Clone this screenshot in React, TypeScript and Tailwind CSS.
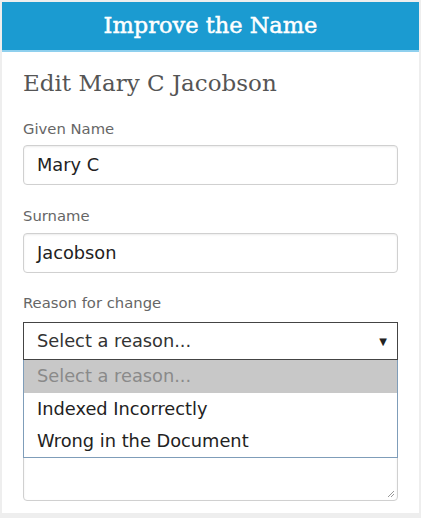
import React from 'react';

const slab = { fontFamily: '"DejaVu Serif", "Liberation Serif", serif' };

const App: React.FC = () => {
    const options = ['Select a reason...', 'Indexed Incorrectly', 'Wrong in the Document'];

    return (
        <div className="w-[421px] h-[518px] bg-[#eeeeee] p-[2px] overflow-hidden" style={{ fontFamily: '"DejaVu Sans", Verdana, sans-serif' }}>
            <div className="bg-white h-[511px] flex flex-col">
                <div className="h-[50px] bg-[#1b9bd1] border-b-2 border-[#8fd0ee] flex items-center justify-center">
                    <h1 className="text-white text-[22.5px] [-webkit-text-stroke:0.5px_white]" style={slab}>Improve the Name</h1>
                </div>
                <div className="pl-[21px] pr-[21px] flex flex-col">
                    <h2 className="text-[#555555] text-[23px] leading-[30px] mt-[16px]" style={slab}>Edit Mary C Jacobson</h2>

                    <label className="text-[#666666] text-[14.8px] leading-[20px] mt-[21px] mb-[6px]">Given Name</label>
                    <div className="h-[40px] shrink-0 border border-[#d0d0d0] rounded-[4px] shadow-[inset_0_1px_2px_rgba(0,0,0,0.08)] flex items-center px-[13px] text-[17.8px] text-[#222222]">Mary C</div>

                    <label className="text-[#666666] text-[14.8px] leading-[20px] mt-[21px] mb-[7px]">Surname</label>
                    <div className="h-[40px] shrink-0 border border-[#d0d0d0] rounded-[4px] shadow-[inset_0_1px_2px_rgba(0,0,0,0.08)] flex items-center px-[13px] text-[17.8px] text-[#222222]">Jacobson</div>

                    <label className="text-[#666666] text-[14.8px] leading-[20px] mt-[20px] mb-[9px]">Reason for change</label>
                    <div className="relative">
                        <div className="h-[38px] border border-[#444444] flex items-center justify-between pl-[13px] pr-[10px] text-[17.8px] text-[#333333]">
                            <span>Select a reason...</span>
                            <span className="text-[10px] text-[#222222]">▼</span>
                        </div>
                        <div className="absolute left-0 right-0 top-[38px] z-10 bg-white border border-t-0 border-[#7f9db9] text-[17.8px]">
                            {options.map((opt, i) => (
                                <div key={opt} className={`flex items-center px-[13px] ${i === 0 ? 'h-[33px] bg-[#c8c8c8] text-[#8a8a8a]' : 'h-[32px] text-[#222222]'}`}>
                                    {opt}
                                </div>
                            ))}
                        </div>

                        <div className="relative mt-[40px] h-[101px] border border-[#d0d0d0] rounded-[4px] shadow-[inset_0_1px_2px_rgba(0,0,0,0.08)]">
                            <svg className="absolute right-[2px] bottom-[2px]" width="9" height="9" viewBox="0 0 9 9">
                                <path d="M8 2 L2 8 M8 5 L5 8" stroke="#999999" strokeWidth="1" />
                            </svg>
                        </div>
                    </div>
                </div>
            </div>
        </div>
    );
};

export default App;
